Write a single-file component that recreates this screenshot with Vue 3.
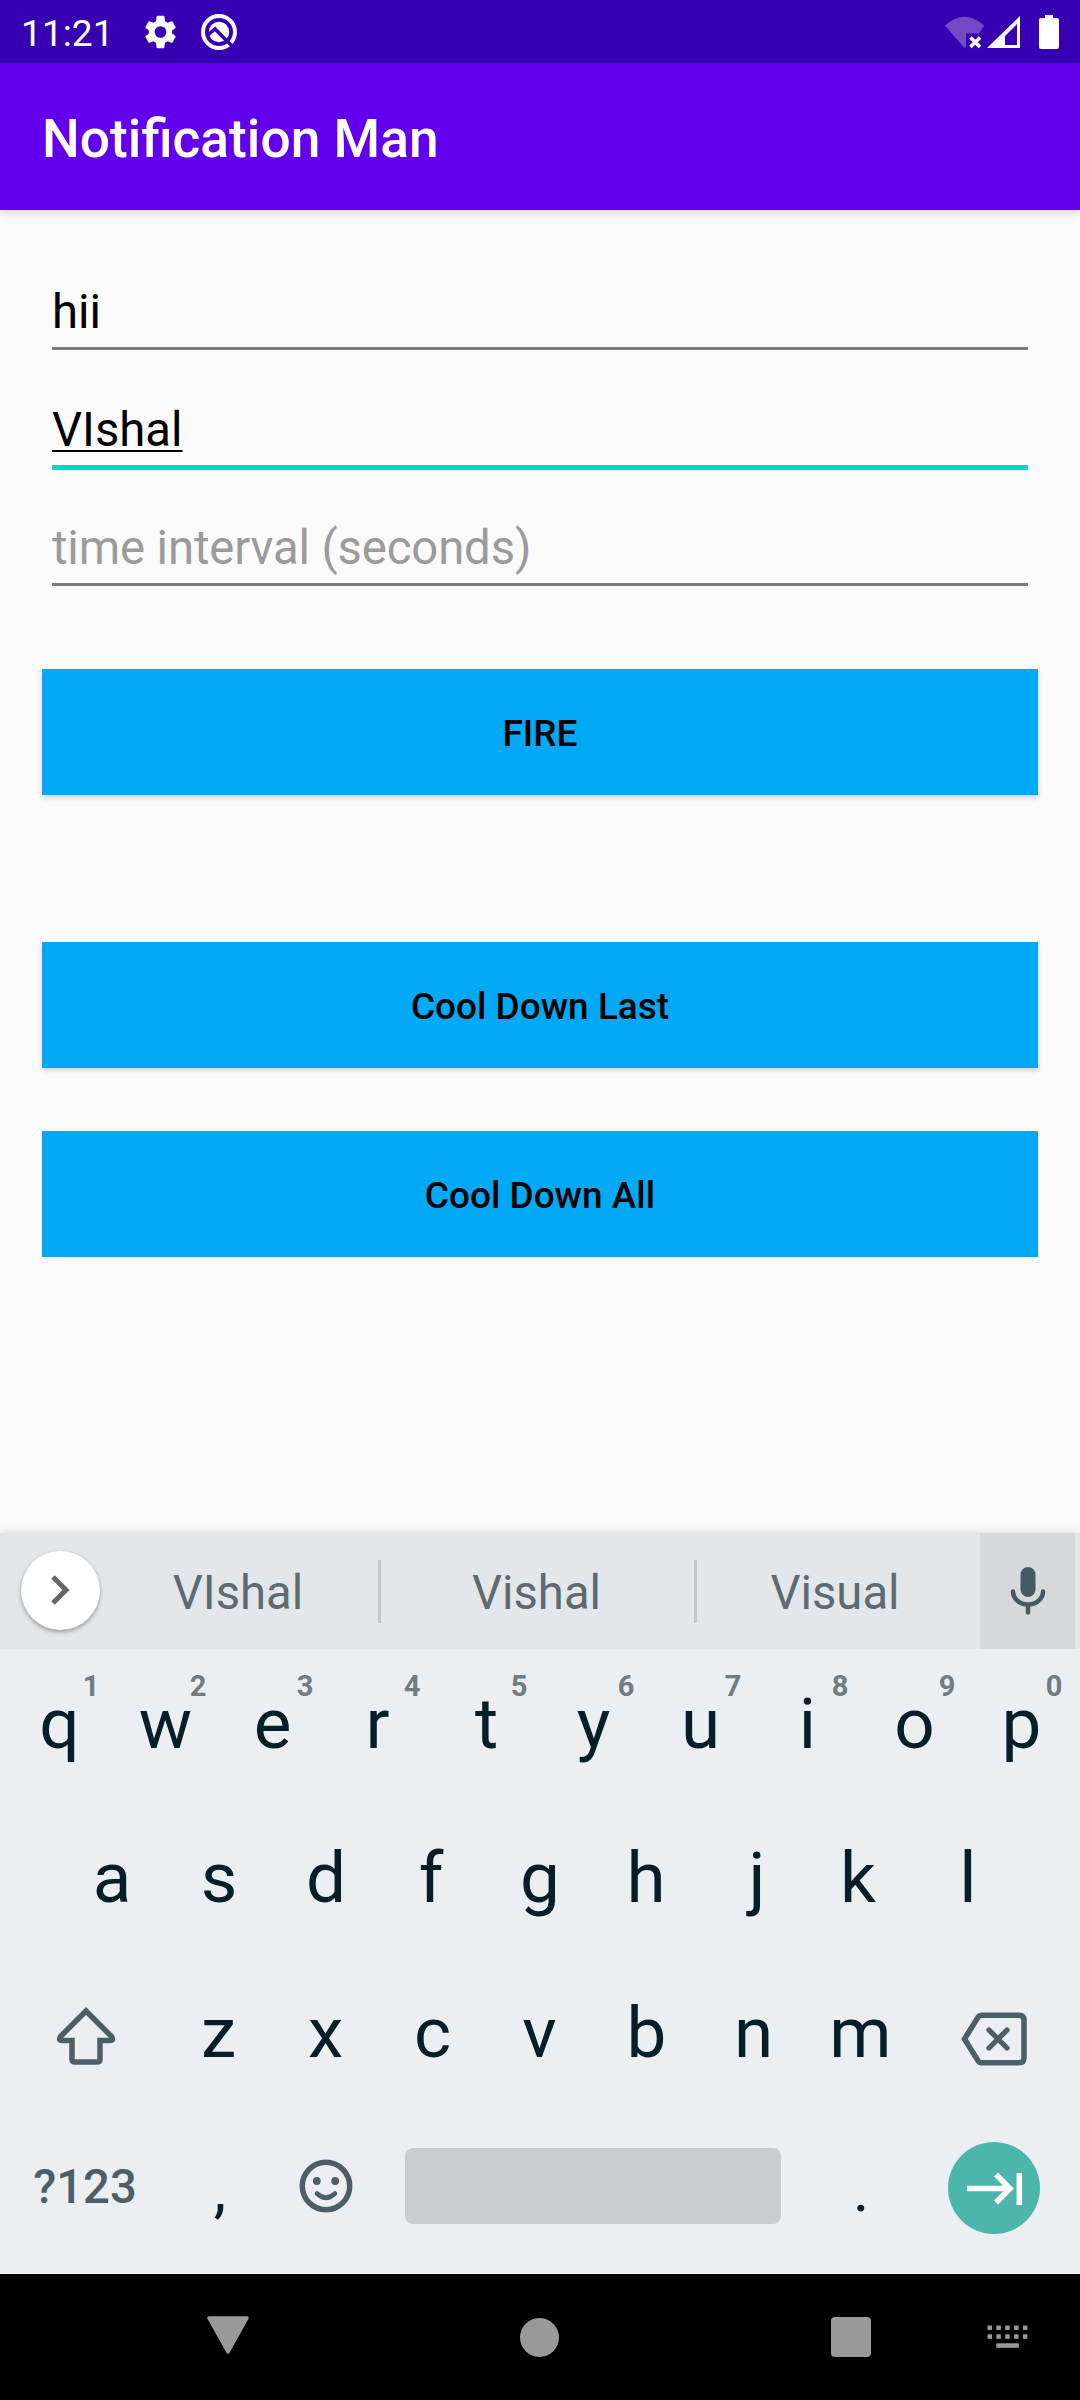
<script setup>
const shifts = { q: 1, r: -2, f: -2, j: 3, k: -3, h: -1 }
const toKey = (letter) => ({ letter, shift: shifts[letter] || 0 })
const topRow = [..."qwertyuiop"].map((letter, i) => ({ ...toKey(letter), hint: (i + 1) % 10 }))
const middleRow = [..."asdfghjkl"].map(toKey)
const bottomRow = [..."zxcvbnm"]
const dots = [0, 1, 2, 3, 4]
</script>

<template>
  <div class="screen">
    <header class="status">
      <span class="clock">11:21</span>
      <svg class="gear" viewBox="0 0 24 24"><path d="M19.14 12.94c.04-.3.06-.61.06-.94 0-.32-.02-.64-.07-.94l2.03-1.58a.49.49 0 0 0 .12-.61l-1.92-3.32a.49.49 0 0 0-.59-.22l-2.39.96c-.5-.38-1.03-.7-1.62-.94L14.4 2.41a.48.48 0 0 0-.48-.41h-3.84a.47.47 0 0 0-.47.41l-.36 2.94c-.59.24-1.13.57-1.62.94l-2.39-.96a.48.48 0 0 0-.59.22L2.74 8.87a.47.47 0 0 0 .12.61l2.03 1.58c-.05.3-.09.63-.09.94s.02.64.07.94l-2.03 1.58a.49.49 0 0 0-.12.61l1.92 3.32c.12.22.37.29.59.22l2.39-.96c.5.38 1.03.7 1.62.94l.36 2.94c.05.24.24.41.48.41h3.84c.24 0 .44-.17.47-.41l.36-2.94c.59-.24 1.13-.56 1.62-.94l2.39.96c.22.08.47 0 .59-.22l1.92-3.32a.47.47 0 0 0-.12-.61zM12 15.6a3.6 3.6 0 1 1 0-7.2 3.6 3.6 0 0 1 0 7.2z" fill="#fff"/></svg>
      <svg class="q-icon" viewBox="0 0 38 38">
        <circle cx="19" cy="19" r="16" fill="none" stroke="#fff" stroke-width="4"/>
        <circle cx="19" cy="19" r="10.200" fill="#fff"/>
        <path d="M8.500 21.500l6.500-5.500L34 35" fill="none" stroke="#3700b3" stroke-width="3.600"/>
      </svg>
      <svg class="signals" viewBox="0 0 120 40">
        <path d="M5 10.500Q24.500-7 44 10.500L39 18.500H26v13L24.500 33z" fill="#7449c8"/>
        <path d="M30.500 22.500l9.500 9.500m0-9.500l-9.500 9.500" stroke="#fff" stroke-width="3.600"/>
        <path d="M80 1v32H47zM77 9L65 21v9h12z" fill="#fff" fill-rule="evenodd"/>
        <path d="M105 0h8v3h4q2 0 2 2v27q0 2-2 2h-16q-2 0-2-2V5q0-2 2-2h4z" fill="#fff"/>
      </svg>
    </header>
    <div class="appbar">Notification Man</div>

    <main class="content">
      <div class="field">hii</div>
      <div class="field focused"><span>VIshal</span></div>
      <div class="field hint">time interval (seconds)</div>
      <button class="action fire">FIRE</button>
      <button class="action last">Cool Down Last</button>
      <button class="action all">Cool Down All</button>
    </main>

    <section class="keyboard">
      <div class="suggestions">
        <div class="expand">
          <svg width="24" height="34" viewBox="0 0 24 34"><path d="M4 3l13 13L4 29" fill="none" stroke="#666" stroke-width="5"/></svg>
        </div>
        <span class="word first">VIshal</span>
        <i class="divider"></i>
        <span class="word second">Vishal</span>
        <i class="divider"></i>
        <span class="word third">Visual</span>
        <div class="mic">
          <svg width="36" height="50" viewBox="0 0 36 50">
            <rect x="10.500" y="1" width="15" height="30" rx="7.500" fill="#455a64"/>
            <path d="M3 25.500a15 13 0 0 0 30 0M18 39v7.500" fill="none" stroke="#455a64" stroke-width="4.500" stroke-linecap="round"/>
          </svg>
        </div>
      </div>

      <div class="row row1">
        <div v-for="k in topRow" :key="k.letter" class="key"><span class="glyph" :style="{ transform: `translateX(${k.shift}px)` }">{{ k.letter }}</span><sup>{{ k.hint }}</sup></div>
      </div>
      <div class="row row2">
        <div v-for="k in middleRow" :key="k.letter" class="key"><span class="glyph" :style="{ transform: `translateX(${k.shift}px)` }">{{ k.letter }}</span></div>
      </div>
      <div class="row row3">
        <div class="wide icon shift">
          <svg width="64" height="62" viewBox="0 0 64 62"><path d="M32 6L6.500 31.500Q4 35.500 8 35.500H18V54q0 3 3 3h22q3 0 3-3V35.500H56q4 0 1.500-4z" fill="none" stroke="#4c5f67" stroke-width="5.500"/></svg>
        </div>
        <div v-for="letter in bottomRow" :key="letter" class="key">{{ letter }}</div>
        <div class="wide icon del">
          <svg width="70" height="56" viewBox="0 0 70 56">
            <path d="M22 4.200H59q5 0 5 5v37.600q0 5-5 5H22q-2.500 0-4-2L4.500 28 18 6.200q1.500-2 4-2z" fill="none" stroke="#4c5f67" stroke-width="5.500"/>
            <path d="M29 19l18 18m0-18l-18 18" stroke="#4c5f67" stroke-width="5.300" stroke-linecap="round"/>
          </svg>
        </div>
      </div>
      <div class="row row4">
        <div class="wide symbols">?123</div>
        <div class="key punct comma">,</div>
        <div class="key icon">
          <svg width="54" height="56" viewBox="0 0 54 56">
            <circle cx="27" cy="28" r="23.700" fill="none" stroke="#4c5f67" stroke-width="5.500"/>
            <circle cx="17.800" cy="23" r="3.900" fill="#4c5f67"/><circle cx="36.200" cy="23" r="3.900" fill="#4c5f67"/>
            <path d="M18 35.500q9 8.500 18 0" fill="none" stroke="#4c5f67" stroke-width="4.600" stroke-linecap="round"/>
          </svg>
        </div>
        <div class="space"></div>
        <div class="key punct">.</div>
        <div class="wide icon">
          <svg class="enter" width="92" height="92" viewBox="0 0 92 92">
            <circle cx="46" cy="46" r="46" fill="#4db6ac"/>
            <path d="M19 46.500H62M48 32.500l14 14-14 14M71.300 31v32" fill="none" stroke="#fff" stroke-width="5.500"/>
          </svg>
        </div>
      </div>
    </section>

    <nav class="nav">
      <svg class="back" viewBox="0 0 42 38"><path d="M2 2H40L21 36z" fill="#999" stroke="#999" stroke-width="3.500" stroke-linejoin="round"/></svg>
      <div class="home"></div>
      <div class="recent"></div>
      <svg class="ime" viewBox="0 0 42 24">
        <g fill="#999">
          <rect v-for="d in dots" :key="'a' + d" :x="d * 8.85 + 0.5" y="0.500" width="4.500" height="4.500"/>
          <rect v-for="d in dots" :key="'b' + d" :x="d * 8.85 + 0.5" y="9.300" width="4.500" height="4.500"/>
          <rect x="9.300" y="18.300" width="22.500" height="4.500"/>
        </g>
      </svg>
    </nav>
  </div>
</template>

<style>
body { margin: 0; }
</style>

<style scoped>
.screen { width: 1080px; height: 2400px; display: flex; flex-direction: column; background: #fafafa; font-family: Roboto, sans-serif; overflow: hidden; }
.screen * { box-sizing: border-box; }
svg { display: block; flex: none; }

.status { height: 63px; flex: none; background: #3700b3; color: #fff; display: flex; align-items: center; padding-left: 21px; }
.clock { font-size: 37.2px; line-height: 40px; padding-top: 3px; width: 120px; }
.gear { width: 39px; height: 40px; }
.q-icon { width: 38px; height: 38px; margin-left: 20px; }
.signals { width: 120px; height: 40px; margin-left: auto; margin-right: 20px; margin-top: 6px; }

.appbar { height: 147px; flex: none; background: #6200ee; color: #fff; font-size: 53.3px; font-weight: 500; line-height: 152px; padding-left: 42px; box-shadow: 0 2px 10px rgba(0, 0, 0, .18); }

.content { height: 1323px; flex: none; padding: 22px 42px 0; display: flex; flex-direction: column; }
.field { height: 118px; flex: none; margin: 0 10px; padding-top: 50px; font-size: 47.25px; line-height: 60px; color: #000; border-bottom: 3px solid #7b7b7b; }
.focused { height: 120px; margin-bottom: -2px; border-bottom: 5px solid #03dac5; }
.focused span { text-decoration: underline; text-decoration-thickness: 2px; text-underline-offset: 4px; text-decoration-skip-ink: none; }
.hint { color: #9b9b9b; letter-spacing: -.12px; }
.action { height: 126px; flex: none; border: 0; padding: 5px 0 0; background: #03a9f4; color: #000; font: 500 36.98px/1.2 Roboto, sans-serif; box-shadow: 0 3px 5px rgba(0, 0, 0, .15); }
.fire { margin-top: 83px; }
.last { margin-top: 147px; }
.all { margin-top: 63px; box-shadow: none; }

.keyboard { height: 741px; flex: none; background: #eceff1; box-shadow: 0 0 8px rgba(0, 0, 0, .15); }
.suggestions { height: 116px; background: #e3e7e9; display: flex; align-items: center; }
.expand { width: 79px; height: 79px; margin: 0 0 1px 21px; border-radius: 50%; background: #fff; display: flex; align-items: center; justify-content: center; box-shadow: 0 2px 4px rgba(0, 0, 0, .35); flex: none; }
.word { width: 313px; flex: none; text-align: center; font-size: 47.25px; line-height: 60px; padding-top: 4px; color: #5c6b72; }
.first { width: 278px; padding-right: 2px; }
.second { padding-right: 2px; }
.third { width: 283px; padding-right: 7px; }
.divider { width: 3px; height: 63px; background: #c3c8ca; flex: none; }
.mic { width: 95px; height: 116px; background: #d7d8da; display: flex; align-items: center; justify-content: center; }

.row { display: flex; padding: 0 6px 0 4px; color: #051e28; font-size: 71px; line-height: 154px; }
.row1 { height: 152px; line-height: 150px; padding: 0 5px; }
.row2 { height: 155px; padding: 0 58.5px; }
.row3 { height: 154px; }
.row4 { height: 164px; }
.key { width: 107px; flex: none; text-align: center; position: relative; }
.glyph { display: block; }
.key sup { position: absolute; right: 6px; top: 21px; width: 30px; text-align: center; font-size: 29px; line-height: 32px; font-weight: 700; color: #6f7c82; }
.wide { flex: 1; text-align: center; }
.icon { display: flex; align-items: center; justify-content: center; }
.row3 .icon { height: 160px; }
.row3 .shift { padding-left: 2px; }
.row3 .del { height: 166px; padding-left: 1px; }
.row4 .icon { height: 151px; }
.row4 .wide.icon { height: 156px; }
.row4 .key.icon { padding-left: 1px; }
.symbols { font-size: 47.25px; font-weight: 500; color: #4c5f67; padding-left: 1px; }
.punct { font-size: 63px; line-height: 159px; padding-left: 1px; }
.comma { padding-left: 3px; }
.space { width: 376px; height: 76px; margin: 38px 26px 0; border-radius: 8px; background: #c9cdcf; flex: none; }

.nav { height: 126px; flex: none; background: #000; display: flex; align-items: center; }
.back { width: 42px; height: 38px; margin-left: 207px; margin-top: -5px; }
.home { width: 39px; height: 39px; border-radius: 50%; background: #999; margin-left: 271px; }
.recent { width: 40px; height: 40px; border-radius: 4px; background: #999; margin-left: 272px; }
.ime { width: 42px; height: 24px; margin-left: 116px; }
</style>
